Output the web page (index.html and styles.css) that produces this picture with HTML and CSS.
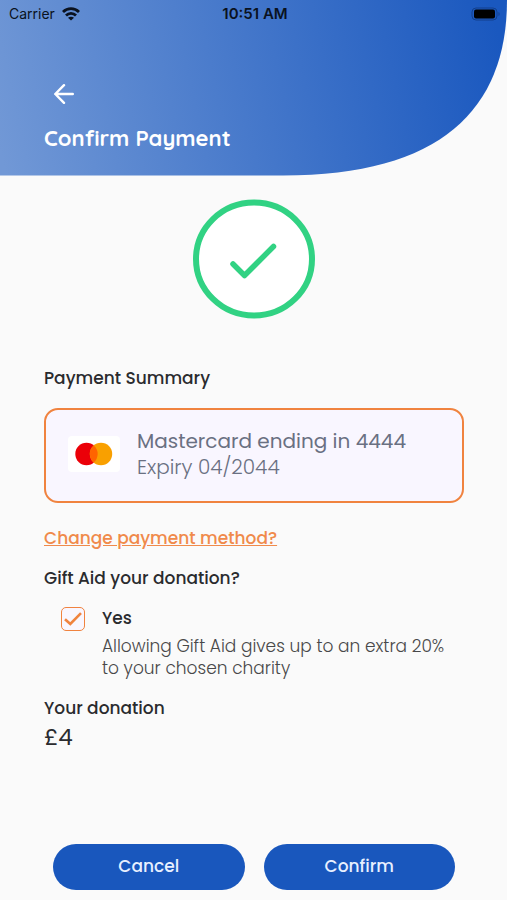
FILE: index.html
```html
<!DOCTYPE html>
<html lang="en">
<head>
<meta charset="utf-8">
<meta name="viewport" content="width=device-width, initial-scale=1">
<title>Confirm Payment</title>
<link rel="stylesheet" href="styles.css">
</head>
<body>
<div class="screen">
  <header class="header">
    <svg class="header-shape" viewBox="0 0 507 176" preserveAspectRatio="none" aria-hidden="true">
      <defs>
        <linearGradient id="sky" gradientUnits="userSpaceOnUse" x1="0" y1="150" x2="500" y2="40">
          <stop offset="0" stop-color="#7198d6"/>
          <stop offset="1" stop-color="#1a58bf"/>
        </linearGradient>
      </defs>
      <path fill="url(#sky)" d="M0 0H507C507 110 440 175.500 283 175.500H0Z"/>
    </svg>
    <div class="status">
      <div class="carrier">
        <span>Carrier</span>
        <svg width="18" height="14" viewBox="0 0 18 14" aria-hidden="true">
          <g fill="none" stroke="#0a1220" stroke-width="2.800">
            <path d="M1 5C5.500.600 12.500.600 17 5"/>
            <path d="M4 8.500C6.800 5.700 11.200 5.700 14 8.500"/>
          </g>
          <path fill="#0a1220" d="M9 13.600L6 10.800C7.700 9.300 10.300 9.300 12 10.800Z"/>
        </svg>
      </div>
      <span class="clock">10:51 AM</span>
      <svg class="battery" width="30" height="14" viewBox="0 0 30 14" aria-hidden="true">
        <rect x="1" y="1" width="25" height="12" rx="4" fill="none" stroke="#123f8c" stroke-width="1"/>
        <rect x="3" y="2.500" width="21" height="9" rx="2" fill="#000"/>
        <path d="M27.500 5v4c1.500-.600 1.500-3.400 0-4Z" fill="#123f8c"/>
      </svg>
    </div>
    <button class="back" type="button" aria-label="Back">
      <svg width="20" height="20" viewBox="0 0 20 20" fill="none" stroke="#fff" stroke-width="2.400" stroke-linecap="round" stroke-linejoin="round" aria-hidden="true">
        <path d="M10 1.200L1.300 10L10 18.800M1.300 10H18.800"/>
      </svg>
    </button>
    <h1 class="title">Confirm Payment</h1>
  </header>

  <main class="content">
    <svg class="success" width="122" height="120" viewBox="0 0 122 120" aria-hidden="true">
      <ellipse cx="61" cy="60" rx="58" ry="56.500" fill="#fff" stroke="#31d283" stroke-width="6"/>
      <path d="M40 65L51.500 76.500L80.500 47.500" fill="none" stroke="#31d283" stroke-width="5.500" stroke-linecap="round" stroke-linejoin="round"/>
    </svg>

    <h2 class="heading">Payment Summary</h2>
    <section class="card">
      <svg class="brand" width="52" height="36" viewBox="0 0 52 36" aria-hidden="true">
        <rect width="52" height="36" rx="4" fill="#fff"/>
        <circle cx="18.500" cy="18" r="11.200" fill="#eb0008"/>
        <circle cx="33" cy="18" r="11.200" fill="#f9a000"/>
        <path d="M25.750 9.500a11.200 11.200 0 0 1 0 17a11.200 11.200 0 0 1 0-17Z" fill="#ff6400"/>
      </svg>
      <div class="card-text">
        <p class="card-name">Mastercard ending in 4444</p>
        <p class="card-expiry">Expiry 04/2044</p>
      </div>
    </section>
    <a class="change" href="#">Change payment method?</a>

    <h2 class="heading" id="gift">Gift Aid your donation?</h2>
    <div class="gift">
      <span class="box">
        <input class="tick" type="checkbox" id="gift-yes" aria-describedby="gift-note" checked>
        <svg class="mark" width="24" height="24" viewBox="0 0 24 24" fill="none" stroke="#f0833f" stroke-width="2.600" aria-hidden="true">
          <path d="M4 12.200L9.300 17L20 6.200"/>
        </svg>
      </span>
      <div>
        <label class="yes" for="gift-yes">Yes</label>
        <p class="note" id="gift-note">Allowing Gift Aid gives up to an extra 20% to your chosen charity</p>
      </div>
    </div>

    <h2 class="heading">Your donation</h2>
    <p class="amount">£4</p>
  </main>

  <footer class="actions">
    <button class="action" type="button">Cancel</button>
    <button class="action" type="button">Confirm</button>
  </footer>
</div>
</body>
</html>
```
FILE: styles.css
```css
* { box-sizing: border-box; }

body {
  margin: 0;
  background: #fafafa;
  color: #2a2b2e;
  font-family: Poppins, Inter, sans-serif;
}

h1, h2, p { margin: 0; }

button { border: 0; font-family: inherit; cursor: pointer; }

.screen {
  display: flex;
  flex-direction: column;
  min-height: 100vh;
}

.header {
  position: relative;
  padding-bottom: 22px;
}

.header-shape {
  position: absolute;
  inset: 0;
  width: 100%;
  height: 100%;
}

.status {
  position: relative;
  display: grid;
  grid-template-columns: 1fr auto 1fr;
  align-items: center;
  height: 27px;
  padding: 0 6px 0 9px;
  color: #0a1220;
  font-family: Inter, sans-serif;
  font-size: 14px;
}

.carrier { display: flex; align-items: center; gap: 7px; }
.carrier svg { display: block; }
.clock { font-size: 15px; font-weight: 600; }
.battery { justify-self: end; }

.back {
  position: relative;
  display: block;
  margin: 47px 0 0 44px;
  padding: 10px;
  background: none;
}

.back svg { display: block; }

.title {
  position: relative;
  margin: 8px 44px 0;
  color: #fff;
  font-family: Quicksand, Inter, sans-serif;
  font-size: 22px;
  font-weight: 700;
  line-height: 32px;
}

.content {
  display: flex;
  flex-direction: column;
  align-items: flex-start;
  padding: 23px 43px 0 44px;
}

.success {
  align-self: center;
  margin-bottom: 46px;
}

.heading {
  font-size: 17px;
  font-weight: 500;
  line-height: 26px;
}

.card {
  display: flex;
  align-items: center;
  gap: 17px;
  align-self: stretch;
  margin: 17px 0 22px;
  padding: 18px 22px 21px;
  border: 2px solid #f0833f;
  border-radius: 14px;
  background: #f9f6ff;
  color: #6a7082;
  font-size: 20px;
  line-height: 26px;
}

.brand { flex: none; }
.card-name { font-weight: 400; }
.card-expiry { font-weight: 300; }

.change {
  margin-bottom: 14px;
  color: #f08a4b;
  font-size: 17px;
  font-weight: 500;
  line-height: 26px;
}

.gift {
  display: flex;
  gap: 17px;
  margin: 14px 0 16px 17px;
}

.box {
  position: relative;
  flex: none;
  width: 24px;
  height: 24px;
  margin-top: 2px;
}

.tick {
  appearance: none;
  display: block;
  width: 24px;
  height: 24px;
  margin: 0;
  border: 1px solid #f0833f;
  border-radius: 5px;
  background: #f9f6ff;
}

.mark {
  position: absolute;
  inset: 0;
  visibility: hidden;
  pointer-events: none;
}

.tick:checked + .mark { visibility: visible; }

.yes {
  display: block;
  font-size: 17px;
  font-weight: 500;
  line-height: 26px;
}

.note {
  margin-top: 4px;
  color: #484849;
  font-size: 17px;
  font-weight: 300;
  line-height: 22px;
}

.amount {
  font-size: 23px;
  font-weight: 400;
  line-height: 32px;
}

.actions {
  display: flex;
  gap: 19px;
  margin-top: auto;
  padding: 20px 52px 10px 53px;
}

.action {
  flex: 1;
  height: 46px;
  padding: 0 0 2px;
  border-radius: 23px;
  background: #1957bd;
  color: #e8f0ff;
  font-size: 17px;
  font-weight: 500;
}
```
